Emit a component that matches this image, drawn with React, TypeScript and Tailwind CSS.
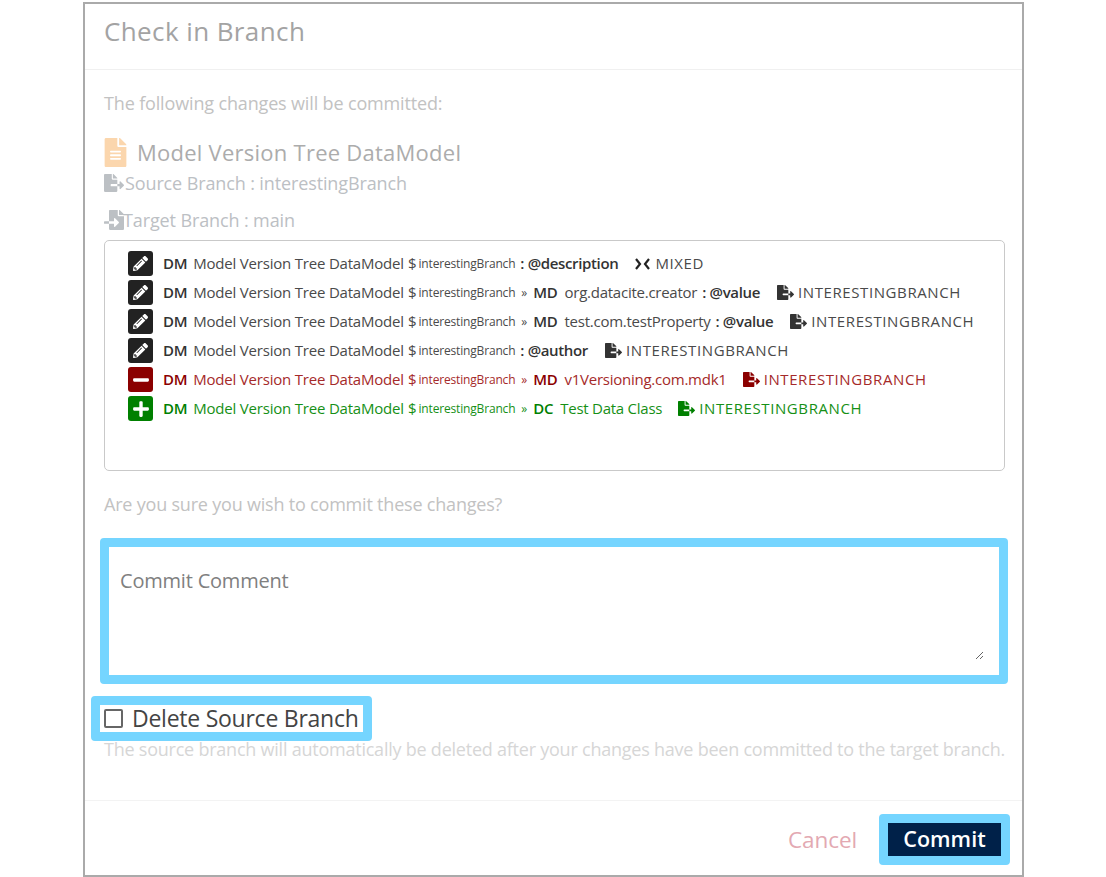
import { FaFileAlt, FaFileExport, FaFileImport, FaMinus, FaPencilAlt, FaPlus } from "react-icons/fa";

type Tone = "dark" | "red" | "green";

const toneText: Record<Tone, string> = {
  dark: "text-[#4a4a4a]",
  red: "text-[#a52a2a]",
  green: "text-[#169016]",
};
const toneStrong: Record<Tone, string> = {
  dark: "text-[#333333]",
  red: "text-[#8b0000]",
  green: "text-[#008000]",
};
const toneBox: Record<Tone, string> = {
  dark: "bg-[#222222]",
  red: "bg-[#8b0000]",
  green: "bg-[#008000]",
};

type Change = {
  tone: Tone;
  sub?: { type: string; name: string };
  attr?: string;
  mixed?: boolean;
};

const changes: Change[] = [
  { tone: "dark", attr: "@description", mixed: true },
  { tone: "dark", sub: { type: "MD", name: "org.datacite.creator" }, attr: "@value" },
  { tone: "dark", sub: { type: "MD", name: "test.com.testProperty" }, attr: "@value" },
  { tone: "dark", attr: "@author" },
  { tone: "red", sub: { type: "MD", name: "v1Versioning.com.mdk1" } },
  { tone: "green", sub: { type: "DC", name: "Test Data Class" } },
];

function MixedIcon() {
  return (
    <svg width="15" height="12" viewBox="0 0 15 12" className="text-[#222222]">
      <path d="M1 1l4 5-4 5M14 1l-4 5 4 5" fill="none" stroke="currentColor" strokeWidth="2.2" />
    </svg>
  );
}

function ChangeRow({ change }: { change: Change }) {
  const { tone, sub, attr, mixed } = change;
  return (
    <div className={`flex h-[29px] items-center whitespace-nowrap text-[15px] ${toneText[tone]}`}>
      <span className={`flex h-[25px] w-[25px] items-center justify-center rounded-[3px] text-white ${toneBox[tone]}`}>
        {tone === "dark" && <FaPencilAlt size={15} />}
        {tone === "red" && <FaMinus size={18} />}
        {tone === "green" && <FaPlus size={18} />}
      </span>
      <span className={`ml-[10px] font-semibold tracking-[-0.3px] ${toneStrong[tone]}`}>DM</span>
      <span className="ml-[6px] tracking-[-0.2px]">Model Version Tree DataModel</span>
      <span className="ml-[4px]">$</span>
      <span className="ml-[2px] text-[12px] tracking-[-0.17px]">interestingBranch</span>
      {sub && <span className="ml-[6px] text-[12px]">»</span>}
      {sub && <span className={`ml-[6px] font-semibold tracking-[-0.3px] ${toneStrong[tone]}`}>{sub.type}</span>}
      {sub && <span className="ml-[7px] tracking-[-0.25px]">{sub.name}</span>}
      {attr && (
        <span className={`font-semibold tracking-[-0.35px] ${toneStrong[tone]} ${sub ? "ml-[5px]" : "ml-[5px]"}`}>
          : {attr}
        </span>
      )}
      <span className={`flex items-center ${attr ? "ml-[17px]" : "ml-[16px]"}`}>
        {mixed ? (
          <MixedIcon />
        ) : (
          <FaFileExport size={17} className={toneStrong[tone]} />
        )}
      </span>
      <span className={`tracking-[0.6px] ${mixed ? "ml-[5px]" : "ml-[4px]"}`}>
        {mixed ? "MIXED" : "INTERESTINGBRANCH"}
      </span>
    </div>
  );
}

export default function App() {
  return (
    <div className="h-[877px] w-[1106px] overflow-hidden bg-white pl-[83px] pt-[2px] font-['Open_Sans','Noto_Sans',sans-serif]">
      <div className="flex h-[875px] w-[941px] flex-col border-2 border-[#aaaaaa] bg-white">
        <div className="flex h-[66px] shrink-0 items-center border-b border-[#f0f0f0] pb-[10px] pl-[19px]">
          <h2 className="text-[26px] font-medium tracking-[0.4px] text-[#a3a3a3]">Check in Branch</h2>
        </div>

        <div className="flex flex-1 flex-col px-[19px]">
          <p className="mt-[21px] text-[18px] leading-[24px] tracking-[-0.15px] text-[#c2c2c2]">
            The following changes will be committed:
          </p>

          <div className="mt-[18px] flex h-[38px] items-center">
            <FaFileAlt size={29} className="-ml-[3px] text-[#fbd6ad]" />
            <span className="ml-[7px] text-[22px] font-medium tracking-[0.25px] text-[#acacac]">
              Model Version Tree DataModel
            </span>
          </div>
          <div className="flex h-[24px] items-center text-[18px] font-medium tracking-[-0.12px] text-[#bcc0c4]">
            <FaFileExport size={20} className="mr-[1px] shrink-0" />
            <span>Source Branch : interestingBranch</span>
          </div>
          <div className="mt-[13px] flex h-[24px] items-center text-[18px] font-medium tracking-[-0.12px] text-[#bcc0c4]">
            <FaFileImport size={20} className="-mr-[1px] shrink-0" />
            <span>Target Branch : main</span>
          </div>

          <div className="mt-[8px] h-[231px] w-[901px] rounded-[5px] border border-[#c9c9c9] pl-[23px] pt-[8px]">
            {changes.map((change, i) => (
              <ChangeRow key={i} change={change} />
            ))}
          </div>

          <p className="mt-[21px] text-[18px] leading-[24px] tracking-[-0.2px] text-[#c2c2c2]">
            Are you sure you wish to commit these changes?
          </p>

          <div className="-ml-[4px] mt-[22px] flex h-[146px] w-[908px] rounded-[4px] border-[9px] border-[#75d5ff] bg-white pb-[15px] pr-[15px]">
            <textarea
              placeholder="Commit Comment"
              className="h-full w-full resize-y bg-white pl-[11px] pt-[20px] text-[20px] leading-[28px] tracking-[-0.2px] outline-none placeholder:text-[#808080]"
            />
          </div>

          <div className="-ml-[13px] mt-[12px] flex h-[45px] w-[281px] items-center rounded-[4px] border-[9px] border-[#75d5ff] bg-white pl-[4px]">
            <span className="h-[19px] w-[19px] rounded-[2px] border-2 border-[#666666]" />
            <span className="ml-[9px] text-[23px] tracking-[-0.25px] text-[#444444]">Delete Source Branch</span>
          </div>

          <p className="mt-[-4px] whitespace-nowrap text-[18px] leading-[24px] tracking-[-0.23px] text-[#d6d6d6]">
            The source branch will automatically be deleted after your changes have been committed to the target branch.
          </p>
        </div>

        <div className="flex h-[75px] shrink-0 items-start justify-end border-t border-[#f3f3f3] pt-[13px]">
          <span className="mr-[22px] mt-[9px] text-[22.5px] tracking-[-0.1px] text-[#e3a9b2]">Cancel</span>
          <button className="mr-[12px] flex h-[51px] w-[131px] items-center justify-center rounded-[4px] border-[9px] border-[#75d5ff] bg-[#002149] text-[21.5px] font-semibold text-white">
            Commit
          </button>
        </div>
      </div>
    </div>
  );
}
